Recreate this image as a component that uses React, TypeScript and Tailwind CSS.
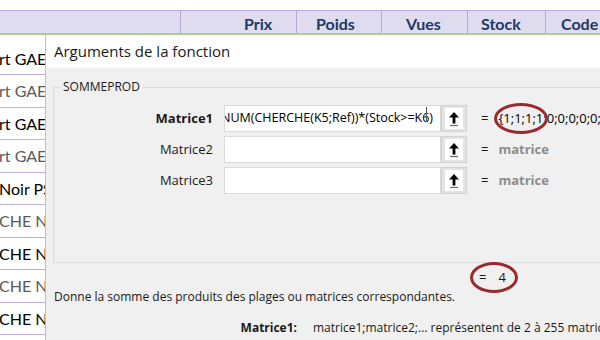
import React from 'react';

const rows = [
  { text: 'rt GAEA', dark: true },
  { text: 'rt GAEA', dark: false },
  { text: 'rt GAEA', dark: true },
  { text: 'rt GAEA', dark: false },
  { text: 'Noir PS', dark: true },
  { text: 'CHE No', dark: false },
  { text: 'CHE No', dark: true },
  { text: 'CHE No', dark: false },
  { text: 'CHE No', dark: true },
];

const heights = ['h-[40px]', 'h-[33px]', 'h-[32px]', 'h-[33px]', 'h-[32px]', 'h-[33px]', 'h-[32px]', 'h-[33px]', 'h-[32px]'];

function RefButton() {
  return (
    <div className="w-[26px] h-[27px] shrink-0 bg-[#e3e3e3] border border-[#d2d2d2] flex items-center justify-center">
      <div className="w-[18px] h-[21px] bg-white flex items-center justify-center">
        <svg width="12" height="16" viewBox="0 0 12 16">
          <polygon points="1,6.5 6,1 11,6.5 7.4,6.5 7.4,12.5 4.6,12.5 4.6,6.5" fill="#000" />
          <line x1="2" y1="14.5" x2="10" y2="14.5" stroke="#6b6b6b" strokeWidth="1.2" />
        </svg>
      </div>
    </div>
  );
}

function ArgRow({ label }: { label: string }) {
  return (
    <div className="flex items-center h-[31px]">
      <div className="w-[159px] shrink-0 text-right text-[13px] text-[#1a1a1a]">{label}</div>
      <div className="ml-[11px] w-[217px] shrink-0 h-[27px] bg-white border border-[#dadada]" />
      <RefButton />
      <div className="ml-[14px] text-[13px] text-[#1a1a1a]">=</div>
      <div className="ml-[10px] text-[13px] font-bold text-[#8c8c8c]">matrice</div>
    </div>
  );
}

export default function App() {
  return (
    <div className="w-[600px] h-[340px] overflow-hidden bg-white" style={{ fontFamily: '"Open Sans", sans-serif' }}>
      <div className="h-[10px]" />

      {/* Sheet header */}
      <div className="flex h-[25px] bg-[#dfdcf0] border-t border-[#bba8dc] border-b-2 border-b-[#a9cf8f] font-['Lato',sans-serif] font-bold text-[16px] text-[#203864] leading-none">
        <div className="w-[181px] border-r border-[#b9a6da]" />
        <div className="w-[116px] border-r border-[#b9a6da] flex items-end pb-[1px] pl-[63px]">Prix</div>
        <div className="w-[85px] border-r border-[#b9a6da] flex items-end pb-[1px] pl-[19px]">Poids</div>
        <div className="w-[86px] border-r border-[#b9a6da] flex items-end pb-[1px] pl-[24px]">Vues</div>
        <div className="w-[78px] border-r border-[#b9a6da] flex items-end pb-[1px] pl-[13px]">Stock</div>
        <div className="flex-1 flex items-end pb-[1px] pl-[15px]">Code</div>
      </div>

      <div className="flex h-[305px]">
        {/* Sheet rows behind the dialog */}
        <div className="w-[45px] shrink-0 overflow-hidden font-['Lato',sans-serif] text-[16px]">
          {rows.map((r, i) => (
            <div
              key={i}
              className={`${heights[i]} flex items-center whitespace-nowrap border-b border-[#bfaedd] ${i === 0 ? 'pt-[8px]' : ''} ${r.dark ? 'text-black' : 'text-[#5a5a5a]'}`}
            >
              <span className="-ml-[1px]">{r.text}</span>
            </div>
          ))}
        </div>

        {/* Dialog */}
        <div className="flex-1 min-w-0 flex flex-col border-l border-[#b3c9a3] overflow-hidden">
          <div className="h-[33px] shrink-0 bg-white flex items-center pl-[8px] text-[15px] text-[#1a1a1a]">
            Arguments de la fonction
          </div>

          <div className="flex-1 bg-[#f0f0f0] flex flex-col">
            <div className="mt-[19px] ml-[7px] -mr-[10px] h-[176px] border border-[#dcdcdc] relative">
              <div className="absolute -top-[9px] left-[6px] px-[3px] bg-[#f0f0f0] text-[12px] text-[#1a1a1a] leading-[16px]">
                SOMMEPROD
              </div>

              <div className="pt-[15px]">
                <div className="flex items-center h-[31px]">
                  <div className="w-[159px] shrink-0 text-right text-[13px] font-bold text-[#1a1a1a]">Matrice1</div>
                  <div className="ml-[11px] w-[217px] shrink-0 h-[27px] bg-white border border-[#dadada] flex items-center overflow-hidden relative">
                    <span className="-ml-[4px] text-[12.5px] text-black whitespace-nowrap">NUM(CHERCHE(K5;Ref))*(Stock&gt;=K6)</span>
                    <span className="absolute left-[201px] top-[1px] w-px h-[15px] bg-[#555]" />
                  </div>
                  <RefButton />
                  <div className="ml-[14px] text-[13px] text-[#1a1a1a]">=</div>
                  <div className="ml-[10px] relative text-[13px] text-black whitespace-nowrap">
                    {'{1;1;1;1;0;0;0;0;0;0;0;0;0;0;0;0}'}
                    <span className="absolute -left-[4px] -top-[6px] w-[54px] h-[31px] rounded-[50%] border-[3px] border-[#9c2a2c]" />
                  </div>
                </div>
                <ArgRow label="Matrice2" />
                <ArgRow label="Matrice3" />
              </div>
            </div>

            <div className="h-[30px] flex items-center text-[13px] text-[#1a1a1a]">
              <div className="ml-[433px]">=</div>
              <div className="ml-[12px] relative">
                4
                <span className="absolute -left-[28px] -top-[6px] w-[48px] h-[31px] rounded-[50%] border-[3px] border-[#9c2a2c]" />
              </div>
            </div>

            <div className="pl-[8px] mt-[-8px] h-[24px] flex items-center text-[12px] text-[#1a1a1a] whitespace-nowrap">
              Donne la somme des produits des plages ou matrices correspondantes.
            </div>

            <div className="mt-[10px] flex items-center text-[12px] text-[#1a1a1a] whitespace-nowrap">
              <div className="w-[251px] shrink-0 text-right font-bold">Matrice1:</div>
              <div className="ml-[16px] shrink-0">matrice1;matrice2;... représentent de 2 à 255 matrices dont vous voulez</div>
            </div>
          </div>
        </div>
      </div>
    </div>
  );
}
